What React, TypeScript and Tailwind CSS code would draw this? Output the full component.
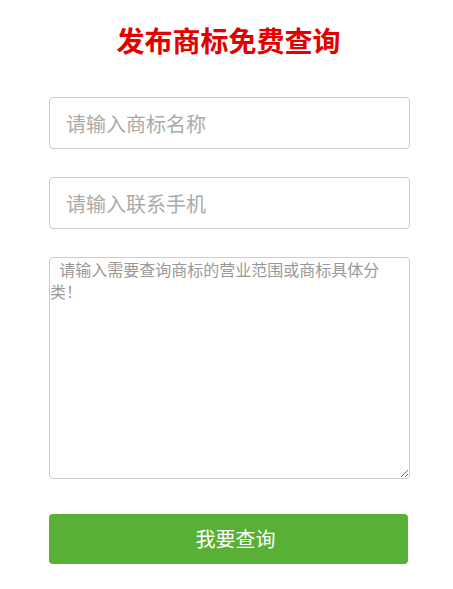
export default function App() {
  const font = { fontFamily: '"Microsoft YaHei", "Noto Sans CJK SC", "Noto Sans", sans-serif' };
  return (
    <div className="w-[453px] h-[589px] bg-white" style={font}>
      <div className="pl-[49px] w-[410px] pt-[20px]">
        <h1 className="text-center text-[28px] leading-[40px] font-bold text-[#e50000] w-[359px]">
          发布商标免费查询
        </h1>
        <div className="mt-[37px] flex flex-col">
          <input
            className="w-[361px] h-[52px] border border-[#ccc] rounded-[4px] pl-[16px] text-[20px] placeholder:text-[#aaa] outline-none"
            placeholder="请输入商标名称"
          />
          <input
            className="mt-[28px] w-[361px] h-[52px] border border-[#ccc] rounded-[4px] pl-[16px] text-[20px] placeholder:text-[#aaa] outline-none"
            placeholder="请输入联系手机"
          />
          <textarea
            className="mt-[28px] w-[361px] h-[222px] border border-[#ccc] rounded-[4px] text-[16px] leading-[22px] placeholder:text-[#999] outline-none resize-y"
            placeholder={"  请输入需要查询商标的营业范围或商标具体分\n类！"}
            style={{ textIndent: "2px" }}
          />
          <button className="mt-[35px] w-[359px] h-[50px] rounded-[4px] bg-[#58b035] text-white text-[20px] pl-[14px]">
            我要查询
          </button>
        </div>
      </div>
    </div>
  );
}
